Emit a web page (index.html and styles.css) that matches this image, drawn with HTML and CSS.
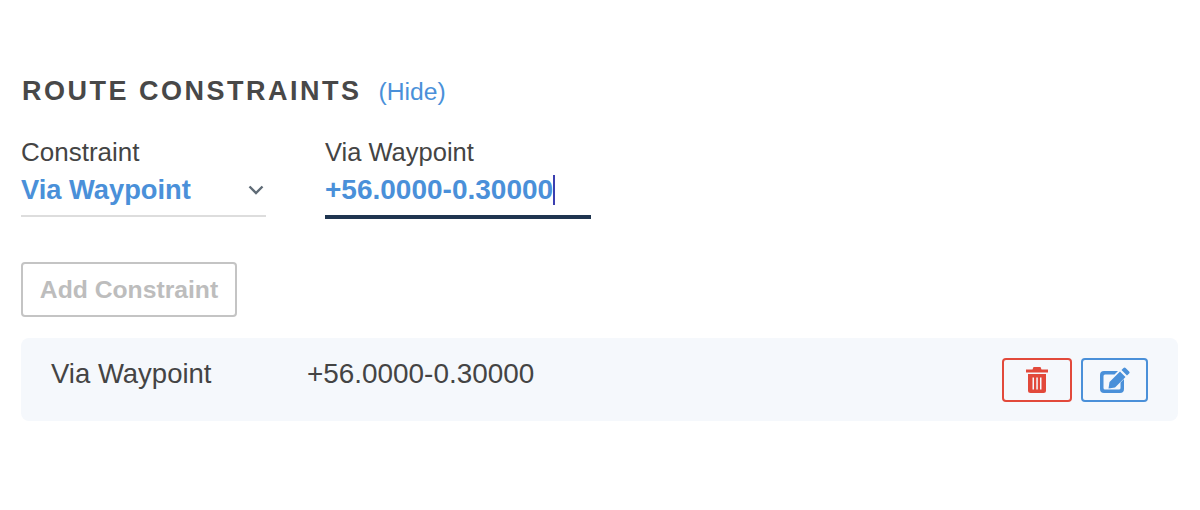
FILE: index.html
```html
<!DOCTYPE html>
<html lang="en">
<head>
  <meta charset="UTF-8" />
  <title>Route Constraints</title>
  <link rel="stylesheet" href="styles.css">
</head>
<body>

<div class="constraints">
  <div class="section-head">
    <h2 class="section-title">ROUTE CONSTRAINTS</h2>
    <a class="hide-link" href="#">(Hide)</a>
  </div>

  <div class="field-row">
    <div class="field field-select">
      <label class="field-label">Constraint</label>
      <div class="field-value">
        <span>Via Waypoint</span>
        <svg class="chevron" width="16" height="10" viewBox="0 0 16 10">
          <path d="M1.5 1.5 8 8l6.5-6.5" fill="none" stroke="#5f6b76" stroke-width="2.4"/>
        </svg>
      </div>
    </div>
    <div class="field field-input">
      <label class="field-label">Via Waypoint</label>
      <div class="field-value"><span>+56.0000-0.30000</span><i class="caret"></i></div>
    </div>
  </div>

  <button class="add-btn" disabled>Add Constraint</button>

  <div class="constraint-row">
    <span class="row-type">Via Waypoint</span>
    <span class="row-value">+56.0000-0.30000</span>
    <div class="row-actions">
      <button class="icon-btn delete-btn">
        <svg width="22" height="26" viewBox="0 0 22 26">
          <path fill="#e2493b" fill-rule="evenodd" d="M7.5 0h7l1 2.500H22v3H0v-3h6.500zM2 7h18v16.500a2.500 2.500 0 0 1-2.500 2.500h-13A2.500 2.500 0 0 1 2 23.500zm4.500 3.500v12h1.500v-12zm3.800 0v12h1.500v-12zm3.700 0v12h1.500v-12z"/>
        </svg>
      </button>
      <button class="icon-btn edit-btn">
        <svg width="30" height="26" viewBox="0 0 30 26">
          <path fill="#4a90d9" d="M4 4h14l-3.500 3.500H5a1.500 1.500 0 0 0-1.500 1.500v12a1.500 1.500 0 0 0 1.500 1.500h14a1.500 1.500 0 0 0 1.500-1.500v-5.500l3.500-3.500V22a4 4 0 0 1-4 4H4a4 4 0 0 1-4-4V8a4 4 0 0 1 4-4z"/>
          <path fill="#4a90d9" d="M20 4.500l5.500 5.500L15 20.500l-6.500 1 1-6.500zM21.500 3 23.500.9a1.500 1.500 0 0 1 2.100 0l3.500 3.500a1.500 1.500 0 0 1 0 2.100L27 8.500z"/>
        </svg>
      </button>
    </div>
  </div>
</div>

</body>
</html>
```

FILE: styles.css
```css
/* General Styling */
body {
  font-family: "Liberation Sans", Arial, sans-serif;
  background-color: #ffffff;
  color: #444444;
  margin: 0;
}

.constraints {
  padding: 73px 22px 0 21px;
}

/* Section Header */
.section-head {
  display: flex;
  align-items: baseline;
  gap: 17px;
}

.section-title {
  margin: 0;
  padding-left: 1px;
  font-size: 27px;
  line-height: 36px;
  font-weight: bold;
  letter-spacing: 2.5px;
  color: #484848;
}

.hide-link {
  font-size: 24.7px;
  color: #4a90d9;
  text-decoration: none;
}

/* Fields */
.field-row {
  display: flex;
  gap: 59px;
  margin-top: 28px;
}

.field-label {
  display: block;
  font-size: 25.5px;
  line-height: 30px;
  margin-bottom: 7px;
  color: #444444;
}

.field-select .field-label {
  font-size: 26px;
}

.field-value {
  display: flex;
  align-items: center;
  font-size: 27.3px;
  line-height: 32px;
  font-weight: bold;
  color: #4a90d9;
}

.field-select {
  width: 245px;
}

.field-select .field-value {
  justify-content: space-between;
  padding: 0 1px 9px 0;
  border-bottom: 2px solid #dddddd;
}

.chevron {
  margin-right: 1px;
}

.field-input {
  width: 266px;
}

.field-input .field-value {
  font-size: 28px;
  padding-bottom: 9px;
  border-bottom: 4px solid #1f3550;
}

.caret {
  width: 2px;
  height: 30px;
  background-color: #3b3fb0;
}

/* Add Button */
.add-btn {
  display: block;
  width: 216px;
  height: 55px;
  margin-top: 43px;
  padding: 1px 0 0;
  font-family: inherit;
  font-size: 24.7px;
  font-weight: bold;
  color: #bdbdbd;
  background-color: #ffffff;
  border: 2px solid #c4c4c4;
  border-radius: 4px;
}

/* Constraint Row */
.constraint-row {
  display: flex;
  align-items: center;
  height: 83px;
  margin-top: 21px;
  padding: 0 30px 0 30px;
  background-color: #f5f8fc;
  border-radius: 8px;
}

.row-type {
  width: 256px;
  font-size: 27.5px;
  margin-top: -12px;
}

.row-value {
  font-size: 27.9px;
  margin-top: -12px;
}

.row-actions {
  display: flex;
  gap: 9px;
  margin-left: auto;
}

.icon-btn {
  display: flex;
  align-items: center;
  justify-content: center;
  height: 44px;
  padding: 0;
  background: none;
  border: 2px solid;
  border-radius: 4px;
}

.delete-btn {
  width: 70px;
  border-color: #e2493b;
}

.edit-btn {
  width: 67px;
  border-color: #4a90d9;
}
```
